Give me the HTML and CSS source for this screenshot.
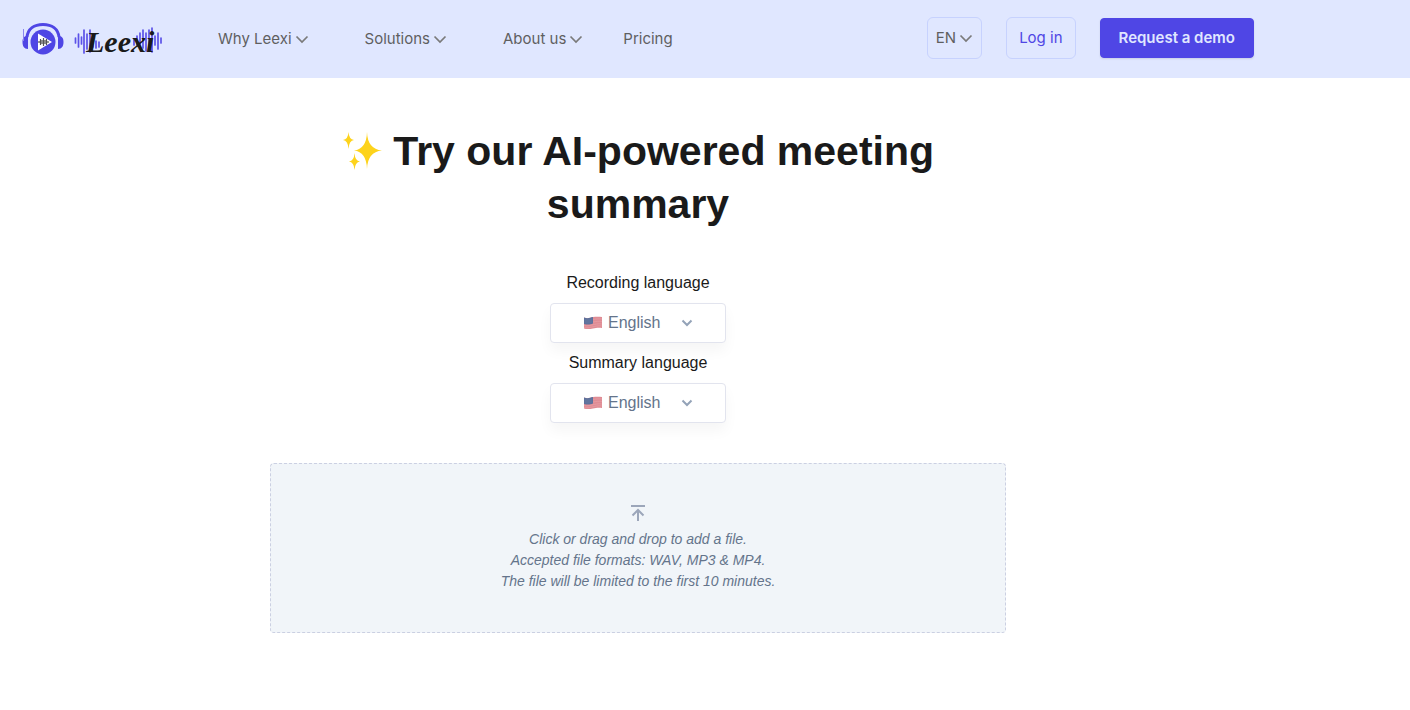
FILE: index.html
```html
<!DOCTYPE html>
<html lang="en">
<head>
    <meta charset="UTF-8">
    <meta name="viewport" content="width=device-width, initial-scale=1.0">
    <title>Leexi - AI-powered meeting summary</title>
    <link rel="stylesheet" href="styles.css">
</head>
<body>
    <!-- Shared symbols -->
    <svg class="symbols" aria-hidden="true">
        <symbol id="chevron" viewBox="0 0 14 14">
            <path d="M1.5 4.5 L7 10 L12.5 4.5" fill="none" stroke="currentColor" stroke-width="1.7"/>
        </symbol>
        <symbol id="flag" viewBox="0 0 20 14">
            <path d="M1 1.5 C5 3 7 1.5 10 1 S16 .5 19 1 V12 C15 11.5 13 12 10 12.5 S4 13.5 1 12.5 Z" fill="#df8c94"/>
            <path d="M10 3.5 C13 3 16 2.5 19 3 M10 6 C13 5.5 16 5 19 5.5 M1 9.5 C5 10.5 8 9 11 8.5 S16 7.5 19 8 M1 11.5 C5 12.5 8 11 11 10.5 S16 9.5 19 10" fill="none" stroke="#e8a2a9" stroke-width=".6"/>
            <path d="M1 1.5 C5 3 7 1.5 10 1 V7.5 C7 8.5 5 9 1 8 Z" fill="#5d719c"/>
            <path d="M2.5 4 H9 M2.5 6 H9" stroke="#7584aa" stroke-width=".8" stroke-dasharray="1 1"/>
        </symbol>
    </svg>

    <header class="header">
        <div class="header-inner">
            <a href="#" class="logo" aria-label="Leexi home">
                <svg width="42" height="34" viewBox="0 0 42 34" aria-hidden="true">
                    <path d="M5 15 C6 7 12 2.5 21 2.5 S36 7 37 15" fill="none" stroke="#4f46e5" stroke-width="3"/>
                    <path d="M6 13.5 V27 C2 27 .5 24 .5 20 S2 14 6 13.5 Z M36 13.5 V27 C40 27 41.5 24 41.5 20 S40 14 36 13.5 Z" fill="#4f46e5"/>
                    <path d="M1.5 7 V19" stroke="#8b86ee" stroke-width="1"/>
                    <circle cx="21" cy="20" r="12.5" fill="#4f46e5"/>
                    <path d="M16 11.5 L30 20 L16 28.5 Z" fill="#fff"/>
                    <path d="M17 19 V21 M18.5 17 V23 M20 18 V22 M21.5 16 V24 M23 18 V22 M24.5 17 V23 M26 19 V21" stroke="#555" stroke-width="1.2"/>
                </svg>
                <svg width="88" height="44" viewBox="0 -4 88 44" aria-hidden="true">
                    <path d="M1.5 17 V22 M4.5 13 V26 M7.5 16 V23 M10 9 V32 M13 13 V28 M16 9 V31 M19 18 V26 M22 20 V27 M25 21 V26 M60 18 V24 M63 15 V24 M66 12 V25 M69 9 V27 M72 12 V30 M75 9 V30 M78 7 V31 M81 15 V24 M84 12 V28 M87 17 V22" stroke="#5b52e8" stroke-width="1.7" stroke-linecap="round"/>
                    <text x="12" y="31" class="logo-text">Leexi</text>
                </svg>
            </a>
            <nav class="nav">
                <button type="button" class="nav-item">Why Leexi <svg class="chevron"><use href="#chevron"/></svg></button>
                <button type="button" class="nav-item">Solutions <svg class="chevron"><use href="#chevron"/></svg></button>
                <button type="button" class="nav-item">About us <svg class="chevron"><use href="#chevron"/></svg></button>
                <a href="#" class="nav-item nav-link">Pricing</a>
            </nav>
            <div class="actions">
                <button type="button" class="btn btn-lang">EN <svg class="chevron"><use href="#chevron"/></svg></button>
                <a href="#" class="btn btn-login">Log in</a>
                <a href="#" class="btn btn-demo">Request a demo</a>
            </div>
        </div>
    </header>

    <main class="container">
        <h1>
            <svg class="sparkles" viewBox="0 0 40 40" aria-hidden="true">
                <path d="M25 1 Q25.5 18 40 19.5 Q25.5 21 25 38 Q24.5 21 12 19.5 Q24.5 18 25 1 Z M6.5 1 Q7 8.5 12 9 Q7 9.5 6.5 18 Q6 9.5 1 9 Q6 8.5 6.5 1 Z M12.5 22 Q13 30 18 30.5 Q13 31 12.5 39 Q12 31 7 30.5 Q12 30 12.5 22 Z"/>
            </svg>
            Try our AI-powered meeting summary
        </h1>

        <form class="summary-form">
            <label for="recording_language">Recording language</label>
            <div class="select-box">
                <select id="recording_language" name="recording_language">
                    <option>English</option>
                </select>
                <svg class="flag"><use href="#flag"/></svg>
                <svg class="select-arrow" viewBox="0 0 12 12"><path d="M1.5 3.5 L6 8 L10.5 3.5"/></svg>
            </div>
            <label for="summary_language">Summary language</label>
            <div class="select-box">
                <select id="summary_language" name="summary_language">
                    <option>English</option>
                </select>
                <svg class="flag"><use href="#flag"/></svg>
                <svg class="select-arrow" viewBox="0 0 12 12"><path d="M1.5 3.5 L6 8 L10.5 3.5"/></svg>
            </div>

            <label class="dropzone" for="recording_file">
                <svg class="upload-icon" viewBox="0 0 16 18" aria-hidden="true">
                    <path d="M1 2 H15 M8 17 V6 M2.5 11.5 L8 6 L13.5 11.5"/>
                </svg>
                <span>Click or drag and drop to add a file.</span>
                <span>Accepted file formats: WAV, MP3 &amp; MP4.</span>
                <span>The file will be limited to the first 10 minutes.</span>
                <input type="file" id="recording_file" name="recording_file" accept=".wav,.mp3,.mp4">
            </label>
        </form>
    </main>
</body>
</html>
```
FILE: styles.css
```css
/* General Styles */
* {
    box-sizing: border-box;
}

body {
    margin: 0;
    font-family: "Liberation Sans", Arial, sans-serif;
    font-size: 16px;
    line-height: 24px;
    color: #1a1a1a;
    background: #fff;
}

.symbols {
    display: none;
}

/* Header */
.header {
    background: #e0e7ff;
    font-family: Inter, sans-serif;
    font-size: 15px;
}

.header-inner {
    display: flex;
    align-items: center;
    max-width: 1276px;
    min-height: 78px;
    padding: 0 22px 2px;
}

.logo {
    display: flex;
    align-items: center;
    gap: 10px;
    padding-top: 2px;
}

.logo-text {
    font-family: "Liberation Serif", serif;
    font-size: 30px;
    font-style: italic;
    font-weight: bold;
    fill: #1a1a1a;
}

.nav {
    display: flex;
    align-items: center;
    gap: 56px;
    margin-left: 56px;
    padding-top: 2px;
}

.nav-item {
    display: flex;
    align-items: center;
    gap: 3px;
    padding: 0;
    border: none;
    background: none;
    font: inherit;
    color: #5f5f5f;
    text-decoration: none;
    white-space: nowrap;
    cursor: pointer;
}

.nav-link {
    margin-left: -16px;
}

.chevron {
    width: 14px;
    height: 14px;
    color: #7a7a7a;
}

.actions {
    display: flex;
    align-items: center;
    gap: 24px;
    margin-left: auto;
}

.btn {
    display: flex;
    align-items: center;
    height: 42px;
    border: 1px solid #c7d2fe;
    border-radius: 6px;
    background: none;
    font: inherit;
    text-decoration: none;
    white-space: nowrap;
    cursor: pointer;
}

.btn-lang {
    gap: 3px;
    padding: 0 8px;
    color: #5f5f5f;
}

.btn-login {
    padding: 0 12px;
    color: #4f46e5;
}

.btn-demo {
    height: 40px;
    padding: 0 18px;
    border-color: #4f46e5;
    border-radius: 4px;
    background: #4f46e5;
    color: #e0e7ff;
    font-weight: 600;
    box-shadow: 0 1px 2px rgba(0, 0, 0, 0.1);
}

/* Main content */
.container {
    max-width: 1276px;
    padding: 47px 24px;
}

h1 {
    max-width: 640px;
    margin: 0 auto 40px;
    font-size: 41px;
    line-height: 53px;
    text-align: center;
}

.sparkles {
    width: 40px;
    height: 40px;
    vertical-align: -6px;
    fill: #fdd31c;
}

.summary-form {
    display: flex;
    flex-direction: column;
    align-items: center;
}

.select-box {
    display: grid;
    grid-template-columns: 33px 20px 1fr 12px 33px;
    align-items: center;
    width: 176px;
    height: 40px;
    margin: 8px 0;
}

.select-box select {
    grid-area: 1 / 1 / 2 / 6;
    width: 100%;
    height: 40px;
    padding: 0 57px;
    border: 1px solid #e2e4ee;
    border-radius: 4px;
    background: #fff;
    font: inherit;
    color: #64748b;
    appearance: none;
    box-shadow: 0 8px 14px rgba(0, 0, 0, 0.04);
}

.flag {
    grid-area: 1 / 2;
    width: 20px;
    height: 14px;
    pointer-events: none;
}

.select-arrow {
    grid-area: 1 / 4;
    width: 12px;
    height: 12px;
    fill: none;
    stroke: #94a3b8;
    stroke-width: 2;
    pointer-events: none;
}

/* Upload area */
.dropzone {
    display: flex;
    flex-direction: column;
    align-items: center;
    width: 100%;
    max-width: 736px;
    margin-top: 32px;
    padding: 40px 16px 39px;
    border: 1px dashed #cbd0e2;
    border-radius: 4px;
    background: #f1f5f9;
    font-size: 14px;
    font-style: italic;
    line-height: 21px;
    color: #64748b;
    text-align: center;
    cursor: pointer;
}

.dropzone input {
    width: 1px;
    height: 1px;
    opacity: 0;
}

.upload-icon {
    width: 16px;
    height: 18px;
    margin-bottom: 7px;
    fill: none;
    stroke: #9ca6ba;
    stroke-width: 2;
}
```
